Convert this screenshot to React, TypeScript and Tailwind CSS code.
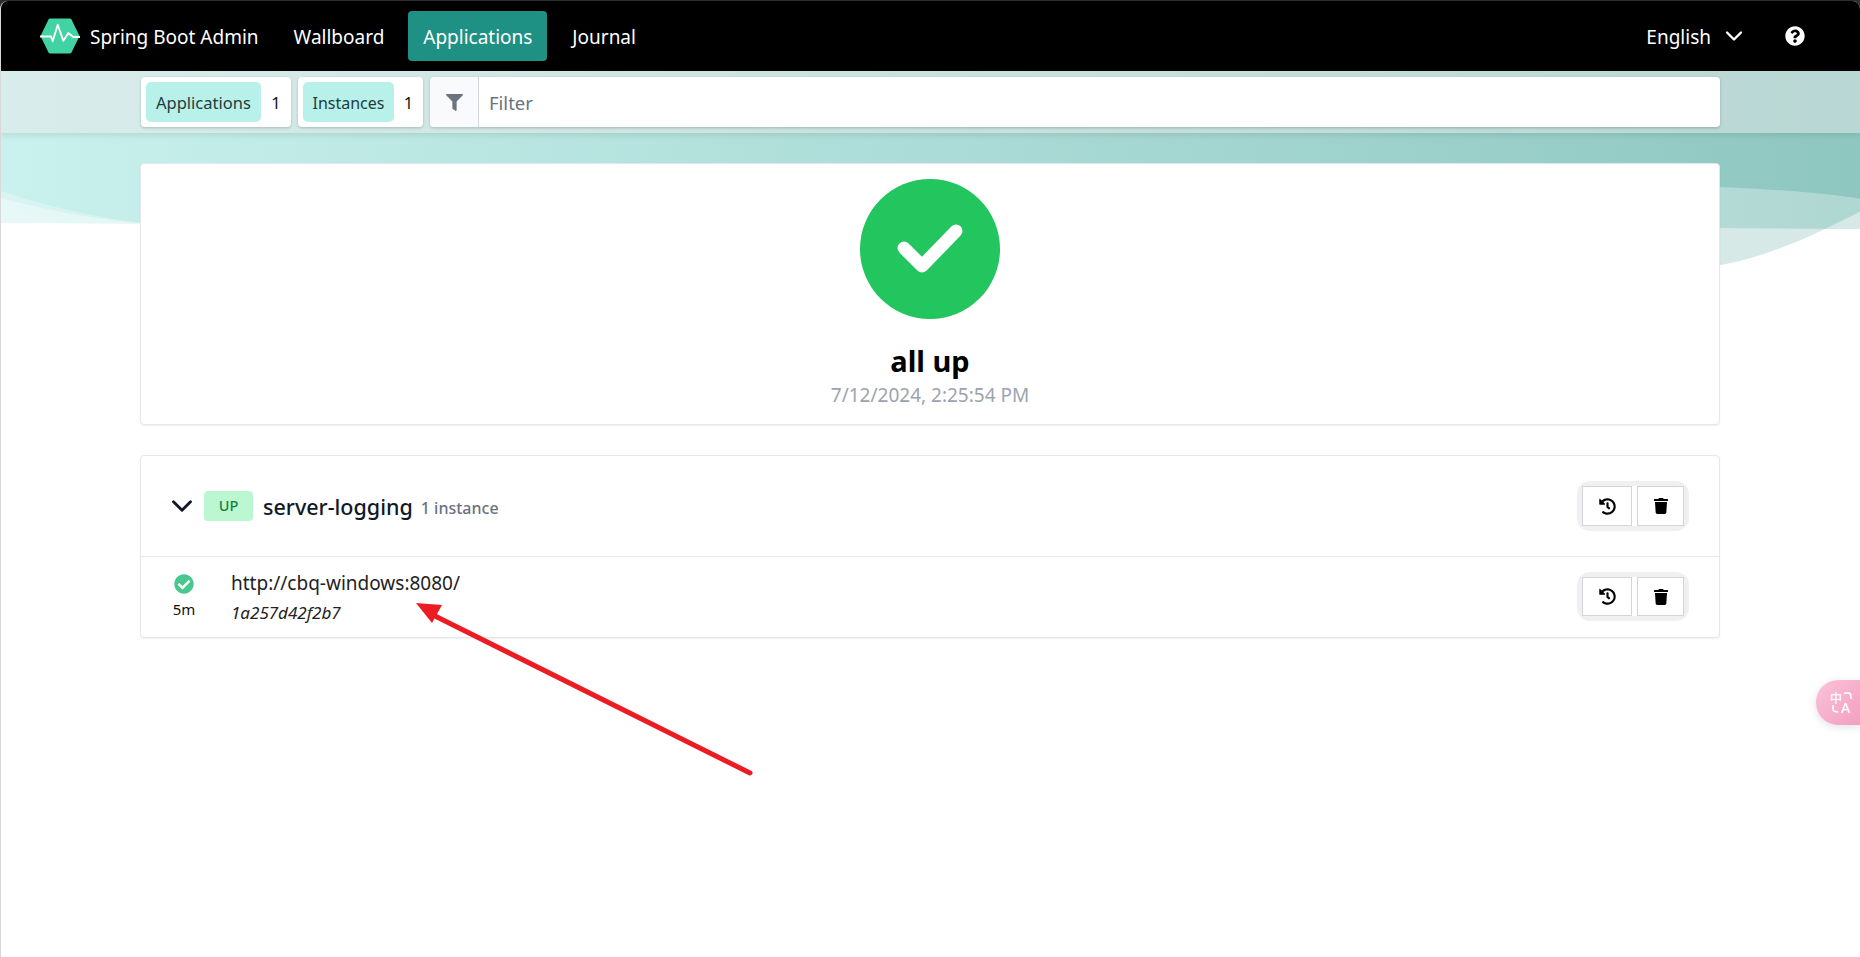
import React from 'react';
import { FaFilter, FaHistory, FaTrash, FaQuestionCircle, FaCheckCircle } from 'react-icons/fa';
import { ChevronDown } from 'lucide-react';

function Logo() {
  return (
    <svg width="40" height="36" viewBox="0 0 40 36" className="shrink-0">
      <path d="M8.5 1.5 Q9 0.5 10.5 0.5 H29.5 Q31 0.5 31.5 1.5 L39.5 18 L31.5 34.5 Q31 35.5 29.5 35.5 H10.5 Q9 35.5 8.5 34.5 L0.5 18 Z" fill="#42d3a5" />
      <path d="M0.5 18.5 H11 L12.7 23.3 L17.7 6.7 L23.3 22.7 L28.3 15 L33.3 19 H39.5" fill="none" stroke="#fff" strokeWidth="1.8" strokeLinejoin="round" strokeLinecap="round" />
    </svg>
  );
}

function Actions({ h }: { h: string }) {
  return (
    <div className="flex gap-[5px] rounded-[8px] bg-white shadow-[0_0_0_5px_#f0f0f0]">
      <button className={`flex w-[50px] items-center justify-center border border-[#d1d5db] bg-white text-black ${h}`}>
        <FaHistory size={17} />
      </button>
      <button className={`flex w-[47px] items-center justify-center border border-[#d1d5db] bg-white text-black ${h}`}>
        <FaTrash size={16} />
      </button>
    </div>
  );
}

function Stat({ label, n, w, px, text }: { label: string; n: string; w: string; px: string; text: string }) {
  return (
    <div className={`flex h-[50px] items-center rounded-[4px] bg-white pl-[5px] shadow-[0_1px_3px_rgba(0,0,0,0.2)] ${w}`}>
      <span className={`flex h-[40px] items-center rounded-[5px] bg-[#b8f0ea] pt-[2px] text-[#1f3d3d] ${px} ${text}`}>{label}</span>
      <span className="flex-1 pt-[2px] text-center text-[16.5px] text-[#111]">{n}</span>
    </div>
  );
}

export default function App() {
  return (
    <div className="relative h-[957px] w-[1860px] overflow-hidden bg-[#2e2e2e] pt-px font-['Noto_Sans','Open_Sans',sans-serif]">
      <div className="relative h-[956px] overflow-hidden rounded-t-[8px] border-l border-[#d8d8d8] bg-white">
        {/* decorative header background */}
        <svg className="absolute left-0 top-0" width="1860" height="270" viewBox="0 0 1860 270">
          <defs>
            <linearGradient id="bg" x1="0" y1="0" x2="1" y2="0">
              <stop offset="0" stopColor="#c9f1ee" />
              <stop offset="1" stopColor="#8ec7c0" />
            </linearGradient>
          </defs>
          <path d="M0 60 H1860 V228 L0 222 Z" fill="url(#bg)" />
          <path d="M0 190 C60 210 110 218 140 222 L0 222 Z" fill="#ffffff" fillOpacity="0.3" />
          <path d="M0 197 C60 213 110 220 140 222 L0 222 Z" fill="#ffffff" fillOpacity="0.35" />
          <path d="M1500 182 C1640 183 1770 184 1860 198 V228 H1500 Z" fill="#ffffff" fillOpacity="0.3" />
          <path d="M1860 210 C1825 228 1775 254 1720 264 L1500 264 V228 H1860 Z" fill="#d6e9e6" />
        </svg>

        <div className="relative">
          {/* navbar */}
          <nav className="flex h-[70px] items-center bg-black pl-[39px] pr-[55px] text-[19px] text-white">
            <Logo />
            <span className="ml-[10px] pt-[2px]">Spring Boot Admin</span>
            <span className="ml-[35px] pt-[2px]">Wallboard</span>
            <span className="ml-[24px] flex h-[50px] w-[139px] items-center justify-center rounded-[4px] bg-[#1f9184] pt-[2px]">Applications</span>
            <span className="ml-[25px] pt-[2px]">Journal</span>
            <div className="ml-auto flex items-center">
              <span className="pt-[2px]">English</span>
              <ChevronDown size={28} strokeWidth={2} className="ml-[9px]" />
              <FaQuestionCircle size={20} className="ml-[37px]" />
            </div>
          </nav>

          {/* filter bar */}
          <div className="flex h-[62px] items-center gap-[7px] bg-[rgba(233,233,233,0.48)] pl-[140px] pr-[140px] shadow-[0_2px_6px_rgba(0,0,0,0.1)]">
            <Stat label="Applications" n="1" w="w-[150px]" px="px-[10px]" text="text-[16.5px]" />
            <Stat label="Instances" n="1" w="w-[125px]" px="px-[9.5px]" text="text-[16px]" />
            <div className="flex h-[50px] flex-1 items-center overflow-hidden rounded-[4px] bg-white shadow-[0_1px_3px_rgba(0,0,0,0.2)]">
              <span className="flex h-full w-[49px] items-center justify-center border-r border-[#d1d5db] bg-[#f9fafb] text-[#6b7280]">
                <FaFilter size={17} />
              </span>
              <span className="pl-[10px] pt-[2px] text-[18.5px] text-[#6b7280]">Filter</span>
            </div>
          </div>

          <main className="flex flex-col gap-[30px] pl-[139px] pr-[140px] pt-[30px]">
            {/* status card */}
            <section className="flex h-[262px] flex-col items-center rounded-[4px] border border-[#e5e7eb] bg-white pt-[15px] shadow-[0_1px_2px_rgba(0,0,0,0.06)]">
              <svg width="140" height="140" viewBox="0 0 140 140">
                <circle cx="70" cy="70" r="70" fill="#22c55e" />
                <path d="M44 69 L62 87 L96 52" fill="none" stroke="#fff" strokeWidth="13" strokeLinecap="round" strokeLinejoin="round" />
              </svg>
              <h1 className="mt-[23px] text-[29px] font-bold leading-[38px] text-black">all up</h1>
              <p className="mt-[3px] text-[19px] leading-[24px] text-[#9ca3af]">7/12/2024, 2:25:54 PM</p>
            </section>

            {/* application card */}
            <section className="rounded-[4px] border border-[#e5e7eb] bg-white shadow-[0_1px_2px_rgba(0,0,0,0.06)]">
              <header className="flex h-[101px] items-center border-b border-[#e5e7eb] pl-[24px] pr-[35px]">
                <ChevronDown size={34} strokeWidth={2} className="text-[#111827]" />
                <span className="ml-[5px] flex h-[30px] w-[49px] items-center justify-center rounded-[4px] bg-[#bbf7d0] text-[14.5px] font-medium text-[#15803d]">UP</span>
                <span className="ml-[10px] mt-[2px] text-[21.5px] font-medium text-[#111827]">server-logging</span>
                <span className="ml-[8px] mt-[3px] text-[16px] font-medium text-[#6b7280]">1 instance</span>
                <div className="ml-auto"><Actions h="h-[40px]" /></div>
              </header>
              <div className="flex h-[80px] items-center pl-[22px] pr-[35px]">
                <div className="flex w-[42px] -translate-y-px flex-col items-center text-[#111]">
                  <FaCheckCircle size={20} className="text-[#48c78e]" />
                  <span className="mt-[6px] text-[15px] leading-[18px]">5m</span>
                </div>
                <div className="ml-[26px] flex flex-col">
                  <span className="text-[19px] leading-[26px] text-[#222]">http://cbq-windows:8080/</span>
                  <span className="mt-[6px] text-[17px] italic leading-[22px] text-[#222]">1a257d42f2b7</span>
                </div>
                <div className="ml-auto mb-[1px]"><Actions h="h-[39px]" /></div>
              </div>
            </section>
          </main>
        </div>

        {/* floating translate button */}
        <div className="absolute left-[1815px] top-[679px] flex h-[45px] w-[45px] items-center rounded-l-[22px] bg-gradient-to-br from-[#fbc2d8] to-[#f29fc0] pl-[15px] shadow-[0_2px_8px_rgba(0,0,0,0.12)]">
          <svg width="22" height="22" viewBox="0 0 22 22" overflow="visible">
            <text x="-1" y="10.5" fontSize="12" fontWeight="500" fill="#fff" fontFamily="'Noto Sans CJK SC',sans-serif">中</text>
            <text x="10" y="21" fontSize="14" fontWeight="500" fill="#fff" fontFamily="'Noto Sans',sans-serif">A</text>
            <path d="M13 1 H17 Q20 1 20 5 V7 M2 13 V17 Q2 20 7 20" fill="none" stroke="#fff" strokeWidth="1.6" />
          </svg>
        </div>

        {/* red annotation arrow */}
        <svg className="pointer-events-none absolute left-0 top-0" width="1860" height="957" viewBox="0 0 1860 957">
          <line x1="749" y1="772" x2="428" y2="612" stroke="#ed1c24" strokeWidth="5" strokeLinecap="round" />
          <path d="M415 602 L441 604 L431 622 Z" fill="#ed1c24" />
        </svg>
      </div>
    </div>
  );
}
